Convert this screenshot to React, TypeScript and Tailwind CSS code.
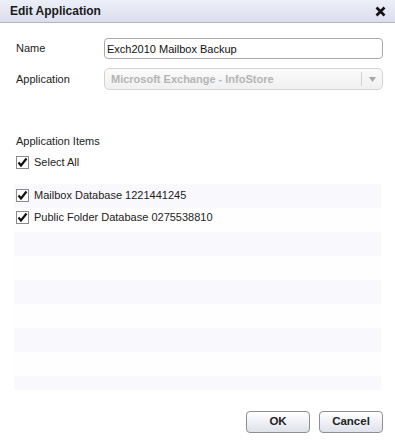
import React, { useState } from 'react';

const CheckBox: React.FC<{ checked: boolean; onToggle: () => void }> = ({ checked, onToggle }) => (
  <button
    type="button"
    onClick={onToggle}
    className="w-[13px] h-[13px] border border-[#8a8a8a] bg-white flex items-center justify-center shrink-0 p-0"
  >
    {checked && (
      <svg width="11" height="11" viewBox="0 0 11 11">
        <path d="M1.5 5.5 L4 8.5 L9.5 1.5" stroke="#111" strokeWidth="2.2" fill="none" />
      </svg>
    )}
  </button>
);

const App: React.FC = () => {
  const [items, setItems] = useState([
    { id: 1, name: 'Mailbox Database 1221441245', checked: true },
    { id: 2, name: 'Public Folder Database 0275538810', checked: true },
  ]);
  const allChecked = items.every((i) => i.checked);

  const toggle = (id: number) =>
    setItems(items.map((i) => (i.id === id ? { ...i, checked: !i.checked } : i)));

  return (
    <div className="w-[395px] h-[443px] bg-white flex flex-col text-[11px] text-[#222] font-['Liberation_Sans',Arial,sans-serif]">
      <div className="h-[23px] shrink-0 flex items-center justify-between pl-[10px] pr-[9px] border-b border-[#b4b6c4] bg-gradient-to-b from-[#eceef8] to-[#dcdeee]">
        <span className="text-[12px] font-bold text-[#1a1a1a]">Edit Application</span>
        <svg width="11" height="11" viewBox="0 0 11 11">
          <path d="M1.5 1.5 L9.5 9.5 M9.5 1.5 L1.5 9.5" stroke="#111" strokeWidth="2.6" />
        </svg>
      </div>

      <div className="flex flex-col pl-[16px] pr-[12px] pt-[15px]">
        <div className="flex items-center h-[21px]">
          <span className="w-[88px]">Name</span>
          <input
            defaultValue="Exch2010 Mailbox Backup"
            className="flex-1 h-[21px] border border-[#a9a9a9] rounded-[4px] px-[2px] text-[11px] text-[#111] outline-none"
          />
        </div>
        <div className="flex items-center h-[22px] mt-[9px]">
          <span className="w-[88px]">Application</span>
          <div className="flex-1 h-[22px] border border-[#d2d2d2] rounded-[5px] flex items-center bg-gradient-to-b from-[#fbfbfb] to-[#f0f0f0]">
            <span className="flex-1 px-[6px] font-bold text-[#b4b4b4]">Microsoft Exchange - InfoStore</span>
            <div className="w-px h-[14px] bg-[#d0d0d0]" />
            <div className="w-[20px] flex justify-center">
              <svg width="7" height="5" viewBox="0 0 7 5">
                <path d="M0 0 L7 0 L3.5 5 Z" fill="#a8a8a8" />
              </svg>
            </div>
          </div>
        </div>

        <div className="mt-[43px]">Application Items</div>
        <div className="flex items-center gap-[5px] mt-[6px] h-[13px]">
          <CheckBox
            checked={allChecked}
            onToggle={() => setItems(items.map((i) => ({ ...i, checked: !allChecked })))}
          />
          <span>Select All</span>
        </div>
      </div>

      <div className="flex flex-col mx-[14px] mt-[15px] pt-[1px] h-[206px] bg-[repeating-linear-gradient(to_bottom,#f9f8fc_0px,#f9f8fc_24px,#fefefe_24px,#fefefe_48px)]">
        {items.map((item) => (
          <div key={item.id} className="h-[22px] flex items-center gap-[5px] pl-[2px]">
            <CheckBox checked={item.checked} onToggle={() => toggle(item.id)} />
            <span>{item.name}</span>
          </div>
        ))}
      </div>

      <div className="flex justify-end gap-[9px] pr-[12px] mt-auto mb-[10px]">
        {['OK', 'Cancel'].map((label) => (
          <button
            key={label}
            type="button"
            className="w-[64px] h-[22px] border border-[#8f8f8f] rounded-[4px] bg-gradient-to-b from-[#ffffff] via-[#eef0f6] to-[#dfe1ea] font-bold text-[11.5px] text-[#222]"
          >
            {label}
          </button>
        ))}
      </div>
    </div>
  );
};

export default App;
